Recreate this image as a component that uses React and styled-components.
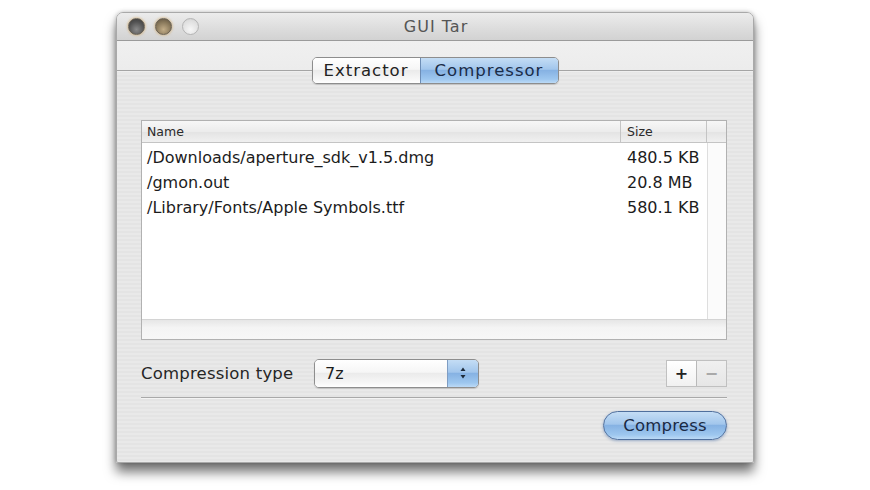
import React from "react"
import styled, { createGlobalStyle } from "styled-components"

const GlobalStyle = createGlobalStyle`
  html, body {
    margin: 0;
    padding: 0;
    background: #ffffff;
  }
  body {
    font-family: "DejaVu Sans", "Liberation Sans", sans-serif;
    color: #1c1c1c;
  }
`

const files = [
  { name: "/Downloads/aperture_sdk_v1.5.dmg", size: "480.5 KB" },
  { name: "/gmon.out", size: "20.8 MB" },
  { name: "/Library/Fonts/Apple Symbols.ttf", size: "580.1 KB" },
]

const aquaBlue = `linear-gradient(
  to bottom,
  #c4ddf5 0%,
  #a2c6ec 45%,
  #86b2e3 50%,
  #9ec7ef 85%,
  #bcdaf6 100%
)`

const aquaWhite = `linear-gradient(
  to bottom,
  #ffffff 0%,
  #f6f6f6 45%,
  #ebebeb 50%,
  #f7f7f7 85%,
  #ffffff 100%
)`

function TrafficLights() {
  return (
    <Lights>
      <Light $tone="dark" />
      <Light $tone="tan" />
      <Light $tone="empty" />
    </Lights>
  )
}

function PopupArrows() {
  return (
    <svg width="8" height="14" viewBox="0 0 8 14">
      <path d="M4 1.5 L6.5 5 L1.5 5 Z" fill="#1d2a3a" />
      <path d="M4 12.5 L6.5 9 L1.5 9 Z" fill="#1d2a3a" />
    </svg>
  )
}

function App() {
  return (
    <>
      <GlobalStyle />
      <Stage>
        <Window>
          <TitleBar>
            <TrafficLights />
            <Title>GUI Tar</Title>
          </TitleBar>

          <TabRow>
            <Segmented>
              <Segment>Extractor</Segment>
              <Segment $active>Compressor</Segment>
            </Segmented>
          </TabRow>

          <Body>
            <Table>
              <HeaderRow>
                <NameHead>Name</NameHead>
                <SizeHead>Size</SizeHead>
                <CornerHead />
              </HeaderRow>
              <TableMain>
                <Rows>
                  {files.map((f) => (
                    <Row key={f.name}>
                      <NameCell>{f.name}</NameCell>
                      <SizeCell>{f.size}</SizeCell>
                    </Row>
                  ))}
                </Rows>
                <VScroll />
              </TableMain>
              <HScroll />
            </Table>

            <OptionsRow>
              <Label>Compression type</Label>
              <Popup>
                <PopupValue>7z</PopupValue>
                <PopupStepper>
                  <PopupArrows />
                </PopupStepper>
              </Popup>
              <Spacer />
              <PlusMinus>
                <PMButton>+</PMButton>
                <PMButton $disabled>−</PMButton>
              </PlusMinus>
            </OptionsRow>

            <Separator />

            <Footer>
              <CompressButton>Compress</CompressButton>
            </Footer>
          </Body>
        </Window>
      </Stage>
    </>
  )
}

const Stage = styled.div`
  width: 870px;
  height: 490px;
  box-sizing: border-box;
  padding: 12px 0 0 116px;
  overflow: hidden;
`

const Window = styled.div`
  width: 638px;
  height: 451px;
  box-sizing: border-box;
  border: 1px solid #a9a9a9;
  border-radius: 7px 7px 2px 2px;
  background: repeating-linear-gradient(
    to bottom,
    #e9e9e9 0px,
    #e9e9e9 2px,
    #e4e4e4 2px,
    #e4e4e4 4px
  );
  box-shadow: 0 9px 12px rgba(0, 0, 0, 0.55), 0 0 4px rgba(0, 0, 0, 0.25);
  display: flex;
  flex-direction: column;
  overflow: hidden;
`

const TitleBar = styled.div`
  height: 27px;
  flex: none;
  position: relative;
  display: flex;
  align-items: center;
  justify-content: center;
  background: linear-gradient(to bottom, #ececec 0%, #dcdcdc 60%, #d2d2d2 100%);
  border-bottom: 1px solid #9b9b9b;
`

const Lights = styled.div`
  position: absolute;
  left: 11px;
  top: 5px;
  display: flex;
  gap: 10px;
`

const Light = styled.div`
  width: 17px;
  height: 17px;
  border-radius: 50%;
  box-sizing: border-box;
  background: ${(p) =>
    p.$tone === "dark"
      ? "radial-gradient(circle at 50% 70%, #8a8a8a 0%, #525252 60%, #383838 100%)"
      : p.$tone === "tan"
      ? "radial-gradient(circle at 50% 70%, #c2ad88 0%, #857558 60%, #5a4f40 100%)"
      : "radial-gradient(circle at 50% 70%, #f6f6f6 0%, #dedede 70%, #c8c8c8 100%)"};
  border: 1px solid ${(p) => (p.$tone === "empty" ? "#b4b4b4" : "#6b6150")};
  box-shadow: ${(p) =>
    p.$tone === "empty" ? "none" : "0 0 2px 1px rgba(214, 178, 120, 0.6)"};
`

const Title = styled.div`
  font-size: 16px;
  letter-spacing: 1px;
  color: #555555;
  margin-left: 2px;
`

const TabRow = styled.div`
  height: 44px;
  flex: none;
  box-sizing: border-box;
  padding-top: 16px;
  display: flex;
  justify-content: center;
  align-items: flex-start;
  background: linear-gradient(
    to bottom,
    #f0f0f0 0px,
    #ececec 29px,
    #a5a5a5 29px,
    #a5a5a5 30px,
    #f3f3f3 30px,
    transparent 32px
  );
`

const Segmented = styled.div`
  display: flex;
  height: 27px;
  box-sizing: border-box;
  border: 1px solid #8d8d8d;
  border-radius: 5px;
  overflow: hidden;
  box-shadow: 0 1px 1px rgba(0, 0, 0, 0.15);
`

const Segment = styled.div`
  display: flex;
  align-items: center;
  justify-content: center;
  font-size: 16.5px;
  letter-spacing: 1px;
  color: ${(p) => (p.$active ? "#1a2c48" : "#222222")};
  background: ${(p) => (p.$active ? aquaBlue : aquaWhite)};
  width: ${(p) => (p.$active ? "137px" : "107px")};
  border-left: ${(p) => (p.$active ? "1px solid #6d8db5" : "none")};
`

const Body = styled.div`
  flex: 1;
  display: flex;
  flex-direction: column;
  padding: 35px 26px 0 24px;
`

const Table = styled.div`
  height: 220px;
  box-sizing: border-box;
  border: 1px solid #b1b1b1;
  background: #ffffff;
  display: flex;
  flex-direction: column;
`

const HeaderRow = styled.div`
  height: 22px;
  flex: none;
  display: flex;
  box-sizing: border-box;
  border-bottom: 1px solid #c4c4c4;
  background: linear-gradient(to bottom, #f7f7f7 0%, #ececec 50%, #e3e3e3 51%, #f0f0f0 100%);
  font-size: 12.5px;
  color: #2a2a2a;
`

const NameHead = styled.div`
  width: 479px;
  box-sizing: border-box;
  padding: 3px 0 0 5px;
  border-right: 1px solid #c4c4c4;
`

const SizeHead = styled.div`
  width: 86px;
  box-sizing: border-box;
  padding: 3px 0 0 6px;
  border-right: 1px solid #c4c4c4;
`

const CornerHead = styled.div`
  flex: 1;
`

const TableMain = styled.div`
  flex: 1;
  display: flex;
`

const Rows = styled.div`
  width: 565px;
  padding-top: 2px;
`

const Row = styled.div`
  height: 25px;
  display: flex;
  align-items: center;
  font-size: 16px;
  color: #1c1c1c;
`

const NameCell = styled.div`
  width: 479px;
  box-sizing: border-box;
  padding-left: 5px;
  white-space: nowrap;
`

const SizeCell = styled.div`
  width: 86px;
  box-sizing: border-box;
  padding-left: 6px;
  white-space: nowrap;
`

const VScroll = styled.div`
  flex: 1;
  border-left: 1px solid #dedede;
  background: #fbfbfb;
`

const HScroll = styled.div`
  height: 19px;
  flex: none;
  border-top: 1px solid #d4d4d4;
  background: linear-gradient(to bottom, #e6e6e6 0%, #f4f4f4 40%, #f7f7f7 100%);
`

const OptionsRow = styled.div`
  display: flex;
  align-items: center;
  margin-top: 18px;
  height: 30px;
`

const Label = styled.div`
  font-size: 16.5px;
  letter-spacing: 0.2px;
  color: #262626;
  width: 173px;
`

const Popup = styled.div`
  width: 165px;
  height: 29px;
  box-sizing: border-box;
  display: flex;
  border: 1px solid #8e8e8e;
  border-radius: 5px;
  overflow: hidden;
  box-shadow: 0 1px 1px rgba(0, 0, 0, 0.15);
`

const PopupValue = styled.div`
  flex: 1;
  display: flex;
  align-items: center;
  padding-left: 10px;
  font-size: 16px;
  background: ${aquaWhite};
`

const PopupStepper = styled.div`
  width: 30px;
  display: flex;
  align-items: center;
  justify-content: center;
  border-left: 1px solid #7f9dc3;
  background: ${aquaBlue};
`

const Spacer = styled.div`
  flex: 1;
`

const PlusMinus = styled.div`
  display: flex;
  height: 27px;
  box-sizing: border-box;
  border: 1px solid #c0c0c0;
`

const PMButton = styled.div`
  width: 29px;
  display: flex;
  align-items: center;
  justify-content: center;
  font-size: 16px;
  font-weight: bold;
  color: ${(p) => (p.$disabled ? "#a9a9a9" : "#222222")};
  background: ${(p) =>
    p.$disabled
      ? "linear-gradient(to bottom, #f0f0f0, #e6e6e6)"
      : "linear-gradient(to bottom, #ffffff, #f1f1f1)"};
  border-left: ${(p) => (p.$disabled ? "1px solid #b9b9b9" : "none")};
`

const Separator = styled.div`
  margin-top: 9px;
  height: 1px;
  background: #a9a9a9;
  box-shadow: 0 1px 0 #f4f4f4;
`

const Footer = styled.div`
  display: flex;
  justify-content: flex-end;
  margin-top: 13px;
`

const CompressButton = styled.div`
  width: 124px;
  height: 29px;
  box-sizing: border-box;
  display: flex;
  align-items: center;
  justify-content: center;
  border: 1px solid #4f6f9d;
  border-radius: 15px;
  background: ${aquaBlue};
  font-size: 16.5px;
  letter-spacing: 0.2px;
  color: #1a2a44;
  box-shadow: 0 1px 3px rgba(60, 100, 160, 0.45);
`

export default App
